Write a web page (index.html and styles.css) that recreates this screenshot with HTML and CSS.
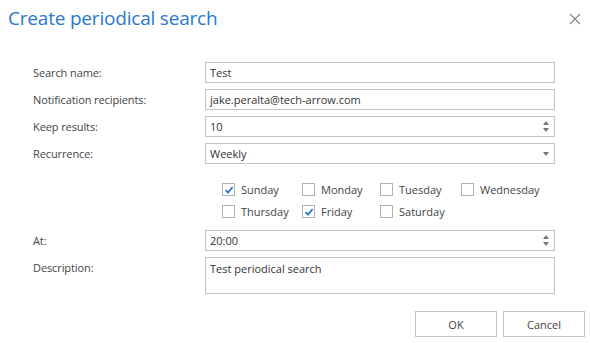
FILE: index.html
```html
<!DOCTYPE html>
<html lang="en">
<head>
    <meta charset="UTF-8">
    <title>Create periodical search</title>
    <link rel="stylesheet" href="styles.css">
</head>
<body>
    <div class="dialog">
        <div class="head">
            <h2 class="title">Create periodical search</h2>
            <span class="close">
                <svg width="12" height="12" viewBox="0 0 12 12"><path d="M1 1L11 11M11 1L1 11" stroke="#888" stroke-width="1.2"/></svg>
            </span>
        </div>

        <div class="form">
            <label class="lbl">Search name:</label>
            <div class="field">Test</div>

            <label class="lbl">Notification recipients:</label>
            <div class="field">jake.peralta@tech-arrow.com</div>

            <label class="lbl">Keep results:</label>
            <div class="field spin">10
                <span class="arrows"><i class="up"></i><i class="down"></i></span>
            </div>

            <label class="lbl">Recurrence:</label>
            <div class="field select">Weekly
                <span class="arrows"><i class="down"></i></span>
            </div>

            <div class="days">
                <span class="day"><span class="box on"><svg width="10" height="10" viewBox="0 0 10 10"><path d="M1.5 5.2L4 7.6L8.6 2" fill="none" stroke="#2a74c9" stroke-width="1.8"/></svg></span>Sunday</span>
                <span class="day"><span class="box"></span>Monday</span>
                <span class="day"><span class="box"></span>Tuesday</span>
                <span class="day"><span class="box"></span>Wednesday</span>
                <span class="day"><span class="box"></span>Thursday</span>
                <span class="day"><span class="box on"><svg width="10" height="10" viewBox="0 0 10 10"><path d="M1.5 5.2L4 7.6L8.6 2" fill="none" stroke="#2a74c9" stroke-width="1.8"/></svg></span>Friday</span>
                <span class="day"><span class="box"></span>Saturday</span>
            </div>

            <label class="lbl">At:</label>
            <div class="field spin">20:00
                <span class="arrows"><i class="up"></i><i class="down"></i></span>
            </div>

            <label class="lbl top">Description:</label>
            <div class="field area">Test periodical search</div>
        </div>

        <div class="buttons">
            <button class="btn">OK</button>
            <button class="btn">Cancel</button>
        </div>
    </div>
</body>
</html>
```

FILE: styles.css
```css
body {
    margin: 0;
    background: #fff;
    font-family: "Open Sans", "Noto Sans", sans-serif;
    color: #444;
}
.dialog {
    width: 590px;
    height: 343px;
}
.head {
    display: flex;
    justify-content: space-between;
    align-items: center;
    height: 36px;
    padding: 0 8px;
}
.title {
    margin: 0;
    font-weight: 400;
    font-size: 19px;
    color: #2a79d0;
    letter-spacing: -0.2px;
}
.close {
    display: flex;
    margin-right: 1px;
    margin-top: 1px;
}
.form {
    display: grid;
    grid-template-columns: 172px 350px;
    grid-auto-rows: auto;
    row-gap: 6px;
    padding: 26px 0 0 33px;
    font-size: 11px;
}
.lbl {
    display: flex;
    align-items: center;
    letter-spacing: -0.1px;
}
.lbl.top {
    align-items: flex-start;
    padding-top: 3px;
}
.field {
    position: relative;
    height: 21px;
    box-sizing: border-box;
    border: 1px solid #c3c3c3;
    padding: 0 4px;
    display: flex;
    align-items: center;
    color: #333;
}
.field.area {
    height: 37px;
    align-items: flex-start;
    padding-top: 3px;
}
.arrows {
    position: absolute;
    right: 5px;
    top: 0;
    bottom: 0;
    display: flex;
    flex-direction: column;
    justify-content: center;
    gap: 3px;
}
.arrows i {
    width: 0;
    height: 0;
    border-left: 3.5px solid transparent;
    border-right: 3.5px solid transparent;
}
.arrows .up {
    border-bottom: 4px solid #777;
}
.arrows .down {
    border-top: 4px solid #777;
}
.days {
    grid-column: 2;
    display: grid;
    grid-template-columns: 80px 78px 81px 90px;
    grid-auto-rows: 15px;
    row-gap: 7px;
    padding: 12px 0 5px 17px;
}
.day {
    display: flex;
    align-items: center;
    gap: 6px;
    font-size: 11px;
    color: #444;
}
.box {
    width: 11px;
    height: 11px;
    border: 1px solid #b3b3b3;
    display: flex;
    align-items: center;
    justify-content: center;
    background: #fff;
}
.buttons {
    display: flex;
    justify-content: flex-end;
    gap: 6px;
    padding: 17px 5px 0 0;
}
.btn {
    width: 82px;
    height: 26px;
    background: #fff;
    border: 1px solid #c3c3c3;
    font-family: "Open Sans", "Noto Sans", sans-serif;
    font-size: 11px;
    color: #444;
}
```
